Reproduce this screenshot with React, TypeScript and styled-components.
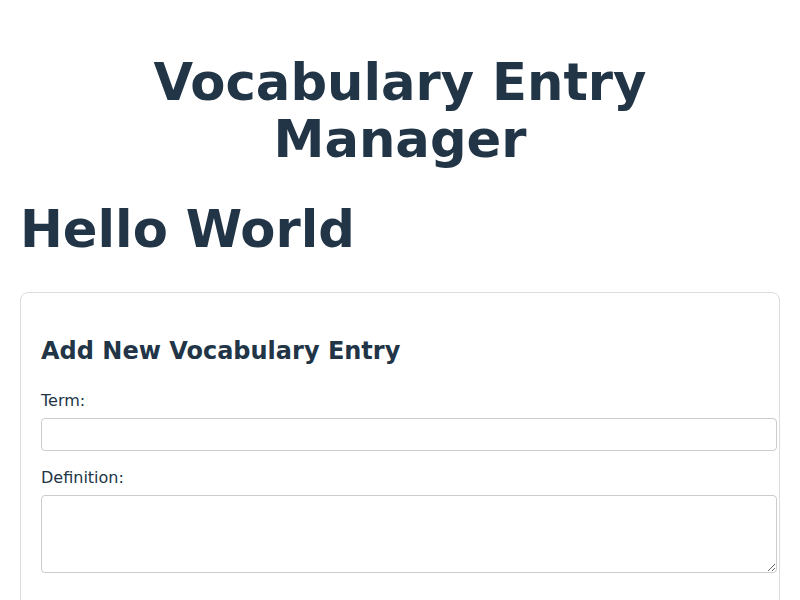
import styled, { createGlobalStyle } from "styled-components";

const GlobalStyle = createGlobalStyle`
  body {
    margin: 0;
    background: #ffffff;
    color: #213547;
    font-family: "DejaVu Sans", sans-serif;
  }
`;

const Page = styled.div`
  padding: 20px;
`;

const Title = styled.h1`
  font-size: 3.2em;
  line-height: 1.1;
  text-align: center;
  margin: 0.67em 0;
`;

const Greeting = styled.h1`
  font-size: 3.2em;
  line-height: 1.1;
  margin: 0.67em 0;
`;

const Card = styled.section`
  border: 1px solid #ddd;
  border-radius: 8px;
  padding: 20px;
`;

const CardTitle = styled.h2`
  font-size: 1.5em;
  margin: 24px 0 26px;
`;

const Field = styled.div`
  margin-bottom: 17px;
`;

const Label = styled.label`
  display: block;
  margin-bottom: 8px;
  font-size: 16px;
`;

const TextInput = styled.input`
  width: 100%;
  padding: 8px;
  border: 1px solid #ccc;
  border-radius: 4px;
  font-size: 13.33px;
`;

const TextArea = styled.textarea`
  display: block;
  width: 100%;
  padding: 8px;
  border: 1px solid #ccc;
  border-radius: 4px;
  font-size: 13.33px;
  height: 60px;
`;

export default function App() {
  return (
    <>
      <GlobalStyle />
      <Page>
        <Title>Vocabulary Entry Manager</Title>
        <Greeting>Hello World</Greeting>
        <Card>
          <CardTitle>Add New Vocabulary Entry</CardTitle>
          <Field>
            <Label htmlFor="term">Term:</Label>
            <TextInput id="term" type="text" />
          </Field>
          <Field>
            <Label htmlFor="definition">Definition:</Label>
            <TextArea id="definition" />
          </Field>
        </Card>
      </Page>
    </>
  );
}
